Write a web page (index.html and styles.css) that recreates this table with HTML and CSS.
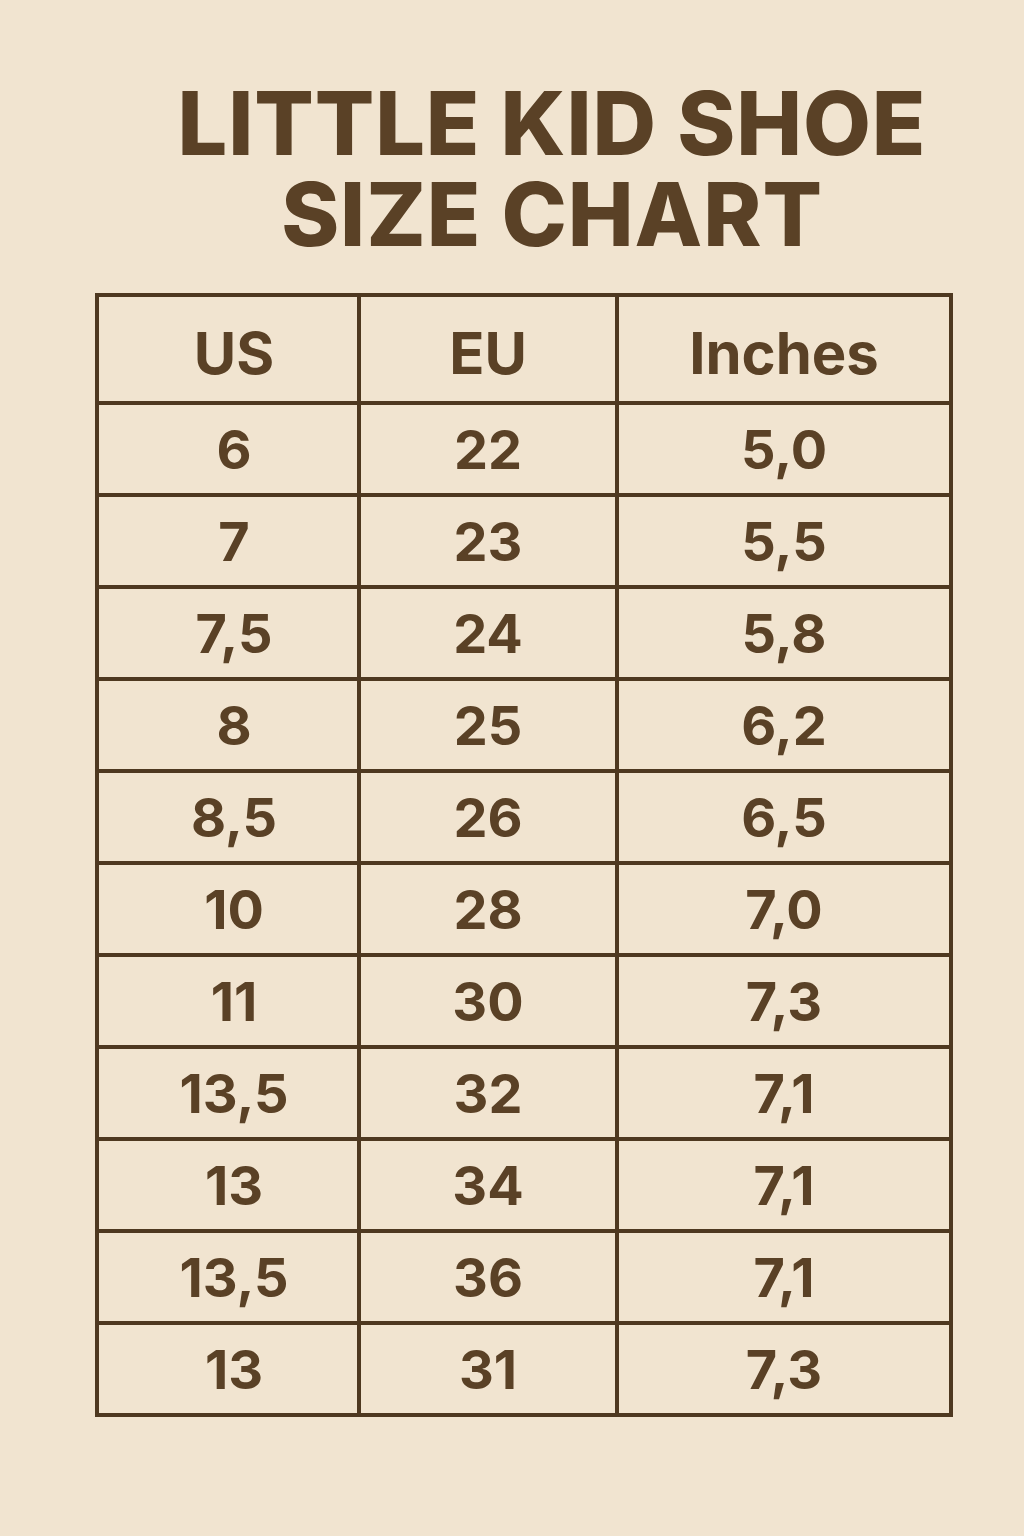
FILE: index.html
```html
<!DOCTYPE html>
<html lang="en">
<head>
<meta charset="utf-8">
<title>Little Kid Shoe Size Chart</title>
<link rel="stylesheet" href="styles.css">
</head>
<body>
<main class="page">
  <h1 class="title">LITTLE KID SHOE<br>SIZE CHART</h1>
  <table class="chart">
    <colgroup>
      <col class="c-us">
      <col class="c-eu">
      <col class="c-in">
    </colgroup>
    <thead>
      <tr><th class="us">US</th><th>EU</th><th>Inches</th></tr>
    </thead>
    <tbody>
      <tr><td class="us">6</td><td>22</td><td>5,0</td></tr>
      <tr><td class="us">7</td><td>23</td><td>5,5</td></tr>
      <tr><td class="us">7,5</td><td>24</td><td>5,8</td></tr>
      <tr><td class="us">8</td><td>25</td><td>6,2</td></tr>
      <tr><td class="us">8,5</td><td>26</td><td>6,5</td></tr>
      <tr><td class="us">10</td><td>28</td><td>7,0</td></tr>
      <tr><td class="us">11</td><td>30</td><td>7,3</td></tr>
      <tr><td class="us">13,5</td><td>32</td><td>7,1</td></tr>
      <tr><td class="us">13</td><td>34</td><td>7,1</td></tr>
      <tr><td class="us">13,5</td><td>36</td><td>7,1</td></tr>
      <tr><td class="us">13</td><td>31</td><td>7,3</td></tr>
    </tbody>
  </table>
</main>
</body>
</html>
```

FILE: styles.css
```css
html, body {
  margin: 0;
  padding: 0;
  background: #f1e4d0;
}

body {
  width: 1024px;
  height: 1536px;
  font-family: Inter, "Liberation Sans", sans-serif;
  color: #5a4126;
}

.page {
  display: flex;
  flex-direction: column;
  align-items: stretch;
  padding-top: 78px;
}

.title {
  margin: 0;
  padding-left: 80px;
  text-align: center;
  font-size: 88px;
  font-weight: 800;
  line-height: 91px;
  letter-spacing: 0.9px;
  color: #5a4126;
}

.chart {
  margin: 33px 0 0 95px;
  width: 854px;
  border-collapse: collapse;
  border: 4px solid #4e3820;
  table-layout: fixed;
}

.c-us { width: 262px; }
.c-eu { width: 258px; }
.c-in { width: 334px; }

.chart th,
.chart td {
  border: 4px solid #4e3820;
  text-align: center;
  padding: 0;
  font-weight: 700;
  font-size: 54px;
  color: #5a4126;
}

.chart th {
  height: 96px;
  padding-top: 8px;
  font-size: 58px;
}

.chart td {
  height: 88px;
}

.chart .us {
  padding-left: 12px;
}
```
